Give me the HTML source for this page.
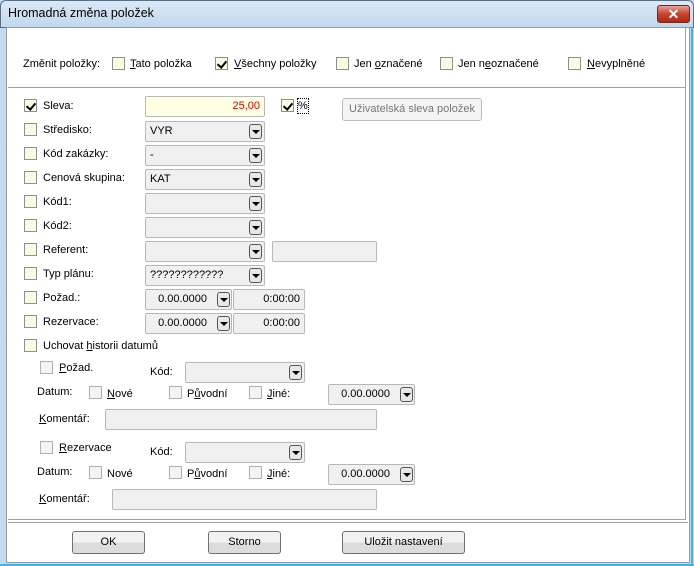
<!DOCTYPE html>
<html><head><meta charset="utf-8"><style>
*{margin:0;padding:0;box-sizing:border-box}
body{width:694px;height:566px;position:relative;overflow:hidden;font-family:"Liberation Sans",sans-serif;font-size:11px;color:#000;background:#c4daf0}
.a{position:absolute}
.t{position:absolute;white-space:nowrap;line-height:14px}
.cb{position:absolute;width:13px;height:13px;border:1px solid #8e8f8f;background:#fbfbe4}
.cb.g{background:#f4f4f4;border-color:#b0b0b0}
.cb.k::after{content:"";position:absolute;left:3px;top:1px;width:4px;height:7px;border:solid #000;border-width:0 2px 2px 0;transform:rotate(40deg)}
.f{position:absolute;height:21px;border:1px solid #b8b8b8;border-radius:2px;background:#f0f0f0;line-height:19px;padding:0 4px}
.dd{position:absolute;width:13px;height:15px;border:1px solid #555;border-radius:3px;background:#e8e8e8;top:2px}
.dd::after{content:"";position:absolute;left:2px;top:5px;border-left:4px solid transparent;border-right:4px solid transparent;border-top:4px solid #000}
.btn{position:absolute;height:23px;border:1px solid #707070;border-radius:3px;background:linear-gradient(#f2f2f2 50%,#dcdcdc 50%);text-align:center;line-height:21px}
u{text-decoration:underline}
</style></head><body>
<div class="a" style="left:0;top:0;width:694px;height:28px;background:linear-gradient(#dbe8f6,#c2d8ee);border-radius:6px 6px 0 0;border:1px solid #5a6f86"></div>
<div class="t" style="left:8px;top:6px;font-size:12.5px">Hromadná změna položek</div>
<div class="a" style="left:657px;top:5px;width:33px;height:18px;border-radius:3px;border:1px solid #6b2b22;background:linear-gradient(#e8a193,#c7432c 50%,#b02a14);color:#fff;font-weight:bold;text-align:center;line-height:16px;font-size:14px">✕</div>
<div class="a" style="left:6px;top:27px;width:684px;height:536px;background:#fff;border:1px solid #999"></div>
<div class="a" style="left:691px;top:27px;width:2px;height:538px;background:#39b6e6"></div>
<div class="a" style="left:0;top:564px;width:694px;height:2px;background:#39b6e6"></div>
<div class="a" style="left:8px;top:87px;width:678px;height:1px;background:#a0a0a0"></div>
<div class="a" style="left:685px;top:28px;width:1px;height:492px;background:#a0a0a0"></div>
<div class="a" style="left:8px;top:519px;width:678px;height:1px;background:#a0a0a0"></div>
<div class="a" style="left:8px;top:522px;width:680px;height:1px;background:#a0a0a0"></div>

<div class="t" style="left:23px;top:57px">Změnit položky:</div>
<div class="cb" style="left:112px;top:57px"></div><div class="t" style="left:130px;top:57px"><u>T</u>ato položka</div>
<div class="cb k" style="left:215px;top:57px"></div><div class="t" style="left:234px;top:57px"><u>V</u>šechny položky</div>
<div class="cb" style="left:336px;top:57px"></div><div class="t" style="left:354px;top:57px">Jen <u>o</u>značené</div>
<div class="cb" style="left:440px;top:57px"></div><div class="t" style="left:458px;top:57px">Jen n<u>e</u>označené</div>
<div class="cb" style="left:568px;top:57px"></div><div class="t" style="left:587px;top:57px"><u>N</u>evyplněné</div>

<div class="cb k" style="left:24px;top:99px"></div><div class="t" style="left:43px;top:99px">Sleva:</div>
<div class="f" style="left:145px;top:96px;width:120px;background:#ffffe1;color:#e00;text-align:right">25,00</div>
<div class="cb k" style="left:281px;top:99px"></div><div class="t" style="left:298px;top:99px;outline:1px dotted #000">%</div>
<div class="btn" style="left:342px;top:98px;width:140px;border-color:#bbb;background:#f4f4f4;color:#777">Uživatelská sleva položek</div>

<div class="cb" style="left:24px;top:123px"></div><div class="t" style="left:43px;top:123px">Středisko:</div>
<div class="f" style="left:145px;top:121px;width:120px">VYR<div class="dd" style="left:103px"></div></div>
<div class="cb" style="left:24px;top:147px"></div><div class="t" style="left:43px;top:147px">Kód zakázky:</div>
<div class="f" style="left:145px;top:145px;width:120px">-<div class="dd" style="left:103px"></div></div>
<div class="cb" style="left:24px;top:171px"></div><div class="t" style="left:43px;top:171px">Cenová skupina:</div>
<div class="f" style="left:145px;top:169px;width:120px">KAT<div class="dd" style="left:103px"></div></div>
<div class="cb" style="left:24px;top:195px"></div><div class="t" style="left:43px;top:195px">Kód1:</div>
<div class="f" style="left:145px;top:193px;width:120px"><div class="dd" style="left:103px"></div></div>
<div class="cb" style="left:24px;top:219px"></div><div class="t" style="left:43px;top:219px">Kód2:</div>
<div class="f" style="left:145px;top:217px;width:120px"><div class="dd" style="left:103px"></div></div>
<div class="cb" style="left:24px;top:243px"></div><div class="t" style="left:43px;top:243px">Referent:</div>
<div class="f" style="left:145px;top:241px;width:120px"><div class="dd" style="left:103px"></div></div>
<div class="f" style="left:272px;top:241px;width:105px"></div>
<div class="cb" style="left:24px;top:267px"></div><div class="t" style="left:43px;top:267px">Typ plánu:</div>
<div class="f" style="left:145px;top:265px;width:120px">????????????<div class="dd" style="left:103px"></div></div>
<div class="cb" style="left:24px;top:291px"></div><div class="t" style="left:43px;top:291px">Požad.:</div>
<div class="f" style="left:145px;top:289px;width:87px;text-align:right;padding-right:24px">0.00.0000<div class="dd" style="left:71px"></div></div>
<div class="f" style="left:233px;top:289px;width:72px;text-align:right">0:00:00</div>
<div class="cb" style="left:24px;top:315px"></div><div class="t" style="left:43px;top:315px">Rezervace:</div>
<div class="f" style="left:145px;top:313px;width:87px;text-align:right;padding-right:24px">0.00.0000<div class="dd" style="left:71px"></div></div>
<div class="f" style="left:233px;top:313px;width:72px;text-align:right">0:00:00</div>
<div class="cb" style="left:24px;top:339px"></div><div class="t" style="left:43px;top:339px">Uchovat <u>h</u>istorii datumů</div>

<div class="cb g" style="left:40px;top:361px"></div><div class="t" style="left:59px;top:361px"><u>P</u>ožad.</div>
<div class="t" style="left:150px;top:365px">Kód:</div>
<div class="f" style="left:185px;top:362px;width:120px"><div class="dd" style="left:103px"></div></div>
<div class="t" style="left:37px;top:385px">Datum:</div>
<div class="cb g" style="left:89px;top:386px"></div><div class="t" style="left:107px;top:387px"><u>N</u>ové</div>
<div class="cb g" style="left:169px;top:386px"></div><div class="t" style="left:187px;top:387px">P<u>ů</u>vodní</div>
<div class="cb g" style="left:249px;top:386px"></div><div class="t" style="left:267px;top:387px"><u>J</u>iné:</div>
<div class="f" style="left:328px;top:384px;width:87px;text-align:right;padding-right:24px">0.00.0000<div class="dd" style="left:71px"></div></div>
<div class="t" style="left:39px;top:412px"><u>K</u>omentář:</div>
<div class="f" style="left:105px;top:409px;width:272px"></div>

<div class="cb g" style="left:40px;top:441px"></div><div class="t" style="left:59px;top:441px"><u>R</u>ezervace</div>
<div class="t" style="left:150px;top:445px">Kód:</div>
<div class="f" style="left:185px;top:442px;width:120px"><div class="dd" style="left:103px"></div></div>
<div class="t" style="left:37px;top:465px">Datum:</div>
<div class="cb g" style="left:89px;top:466px"></div><div class="t" style="left:107px;top:467px">Nové</div>
<div class="cb g" style="left:169px;top:466px"></div><div class="t" style="left:187px;top:467px">P<u>ů</u>vodní</div>
<div class="cb g" style="left:249px;top:466px"></div><div class="t" style="left:267px;top:467px"><u>J</u>iné:</div>
<div class="f" style="left:328px;top:464px;width:87px;text-align:right;padding-right:24px">0.00.0000<div class="dd" style="left:71px"></div></div>
<div class="t" style="left:39px;top:492px"><u>K</u>omentář:</div>
<div class="f" style="left:112px;top:489px;width:265px"></div>

<div class="btn" style="left:72px;top:531px;width:73px">OK</div>
<div class="btn" style="left:208px;top:531px;width:73px">Storno</div>
<div class="btn" style="left:342px;top:531px;width:123px">Uložit nastavení</div>
</body></html>
